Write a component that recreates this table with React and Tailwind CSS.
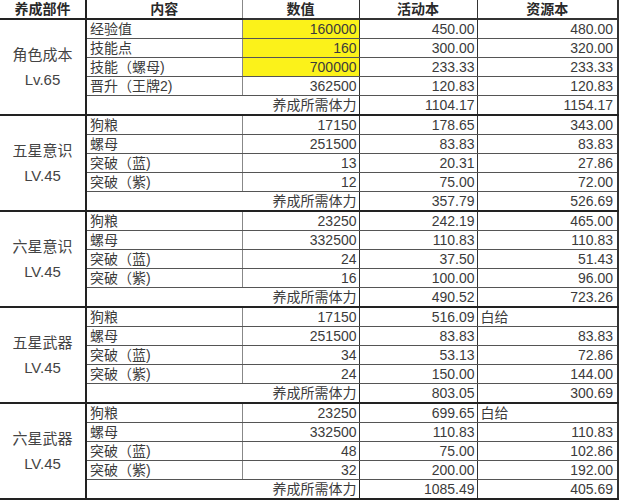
const groups = [
  {
    name: "角色成本",
    lv: "Lv.65",
    rows: [
      ["经验值", "160000", "450.00", "480.00", true],
      ["技能点", "160", "300.00", "320.00", true],
      ["技能（螺母)", "700000", "233.33", "233.33", true],
      ["晋升（王牌2)", "362500", "120.83", "120.83", false],
    ],
    total: ["1104.17", "1154.17"],
  },
  {
    name: "五星意识",
    lv: "LV.45",
    rows: [
      ["狗粮", "17150", "178.65", "343.00"],
      ["螺母", "251500", "83.83", "83.83"],
      ["突破（蓝)", "13", "20.31", "27.86"],
      ["突破（紫)", "12", "75.00", "72.00"],
    ],
    total: ["357.79", "526.69"],
  },
  {
    name: "六星意识",
    lv: "LV.45",
    rows: [
      ["狗粮", "23250", "242.19", "465.00"],
      ["螺母", "332500", "110.83", "110.83"],
      ["突破（蓝)", "24", "37.50", "51.43"],
      ["突破（紫)", "16", "100.00", "96.00"],
    ],
    total: ["490.52", "723.26"],
  },
  {
    name: "五星武器",
    lv: "LV.45",
    rows: [
      ["狗粮", "17150", "516.09", "白给"],
      ["螺母", "251500", "83.83", "83.83"],
      ["突破（蓝)", "34", "53.13", "72.86"],
      ["突破（紫)", "24", "150.00", "144.00"],
    ],
    total: ["803.05", "300.69"],
  },
  {
    name: "六星武器",
    lv: "LV.45",
    rows: [
      ["狗粮", "23250", "699.65", "白给"],
      ["螺母", "332500", "110.83", "110.83"],
      ["突破（蓝)", "48", "75.00", "102.86"],
      ["突破（紫)", "32", "200.00", "192.00"],
    ],
    total: ["1085.49", "405.69"],
  },
];

const font = { fontFamily: '"Liberation Sans", "Noto Sans CJK SC", sans-serif' };

export default function App() {
  return (
    <div className="w-[619px] h-[500px] bg-white overflow-hidden text-[#3b3b3b]" style={font}>
      <table className="table-fixed border-collapse w-[618px] text-[14px] leading-none">
        <colgroup>
          <col className="w-[86px]" />
          <col className="w-[156px]" />
          <col className="w-[117px]" />
          <col className="w-[118px]" />
          <col className="w-[141px]" />
        </colgroup>
        <thead>
          <tr className="h-[19px] font-bold text-[#2a2a2a]">
            <th className="border-r-2 border-b-2 border-[#222] font-bold">养成部件</th>
            <th className="border-r border-b-2 border-r-[#888] border-b-[#222] font-bold">内容</th>
            <th className="border-r-[1.5px] border-b-2 border-[#333] font-bold">数值</th>
            <th className="border-r-[1.5px] border-b-2 border-[#333] font-bold">活动本</th>
            <th className="border-r-2 border-b-2 border-[#333] font-bold">资源本</th>
          </tr>
        </thead>
        <tbody>
          {groups.map((g, gi) => (
            <Group key={gi} g={g} />
          ))}
        </tbody>
      </table>
    </div>
  );
}

function Group({ g }) {
  return (
    <>
      {g.rows.map((r, i) => (
        <tr key={i} className="h-[19px]">
          {i === 0 && (
            <td
              rowSpan={5}
              className="border-r-2 border-b-2 border-[#222] text-center align-middle text-[15px] leading-[25px] text-[#444]"
            >
              <div>{g.name}</div>
              <div>{g.lv}</div>
            </td>
          )}
          <td className="border-r border-b border-r-[#888] border-b-[#555] pl-[3px] text-left">{r[0]}</td>
          <td
            className={`border-r-[1.5px] border-b border-r-[#333] border-b-[#555] pr-[2px] text-right ${
              r[4] ? "bg-[#fbf21a]" : ""
            }`}
          >
            {r[1]}
          </td>
          <td className="border-r-[1.5px] border-b border-r-[#333] border-b-[#555] pr-[2px] text-right">{r[2]}</td>
          {r[3] === "白给" ? (
            <td className="border-r-2 border-b border-r-[#333] border-b-[#555] pl-[3px] text-left">{r[3]}</td>
          ) : (
            <td className="border-r-2 border-b border-r-[#333] border-b-[#555] pr-[4px] text-right">{r[3]}</td>
          )}
        </tr>
      ))}
      <tr className="h-[20px]">
        <td colSpan={2} className="border-r-[1.5px] border-b-2 border-[#222] pr-[2px] text-right">
          养成所需体力
        </td>
        <td className="border-r-[1.5px] border-b-2 border-r-[#333] border-b-[#222] pr-[2px] text-right">{g.total[0]}</td>
        <td className="border-r-2 border-b-2 border-r-[#333] border-b-[#222] pr-[4px] text-right">{g.total[1]}</td>
      </tr>
    </>
  );
}
